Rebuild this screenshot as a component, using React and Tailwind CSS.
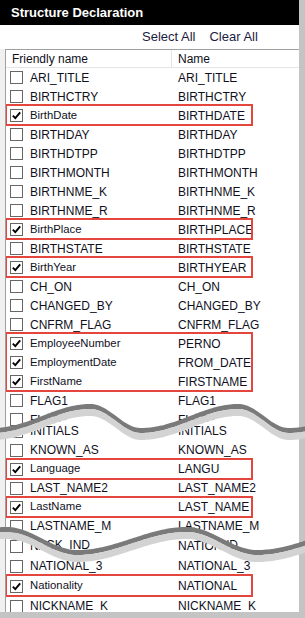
import React from "react";

const pieceA = [
  ["ARI_TITLE", "ARI_TITLE"],
  ["BIRTHCTRY", "BIRTHCTRY"],
  ["BirthDate", "BIRTHDATE", true, "box"],
  ["BIRTHDAY", "BIRTHDAY"],
  ["BIRTHDTPP", "BIRTHDTPP"],
  ["BIRTHMONTH", "BIRTHMONTH"],
  ["BIRTHNME_K", "BIRTHNME_K"],
  ["BIRTHNME_R", "BIRTHNME_R"],
  ["BirthPlace", "BIRTHPLACE", true, "box"],
  ["BIRTHSTATE", "BIRTHSTATE"],
  ["BirthYear", "BIRTHYEAR", true, "box"],
  ["CH_ON", "CH_ON"],
  ["CHANGED_BY", "CHANGED_BY"],
  ["CNFRM_FLAG", "CNFRM_FLAG"],
  ["EmployeeNumber", "PERNO", true, "g1"],
  ["EmploymentDate", "FROM_DATE", true, "g1"],
  ["FirstName", "FIRSTNAME", true, "g1"],
  ["FLAG1", "FLAG1"],
  ["FLAG2", "FLAG2"],
];

const pieceB = [
  ["INITIALS", "INITIALS"],
  ["KNOWN_AS", "KNOWN_AS"],
  ["Language", "LANGU", true, "box"],
  ["LAST_NAME2", "LAST_NAME2"],
  ["LastName", "LAST_NAME", true, "box"],
  ["LASTNAME_M", "LASTNAME_M"],
  ["LOCK_IND", "LOCK_IND"],
];

const pieceC = [
  ["NATIONAL_2", "NATIONAL_2"],
  ["NATIONAL_3", "NATIONAL_3"],
  ["Nationality", "NATIONAL", true, "box"],
  ["NICKNAME_K", "NICKNAME_K"],
];

// skewed sine used for the torn edges
function skew(x, x0, P, r, yc, A) {
  const p = ((((x - x0) % P) + P) % P) / P;
  if (p < r) return yc + (A / 2) * Math.cos((Math.PI * p) / r);
  return yc - (A / 2) * Math.cos((Math.PI * (p - r)) / (1 - r));
}

const wave1 = (x) => skew(x, -7, 148, 0.66, 416, 24);
const wave2 = (x) => skew(x, 77, 180, 0.61, 538.5, 23);

function line(f, dy) {
  const out = [];
  for (let x = 0; x <= 306; x += 2) out.push([x, f(x) + dy]);
  return out;
}

function band(f, a, b) {
  const top = line(f, a);
  const bot = line(f, b).reverse();
  return [...top, ...bot].map(([x, y]) => `${x},${y.toFixed(1)}`).join(" ");
}

function clip(f, offset, top) {
  const pts = line(f, offset).map(([x, y]) => `${x - 6}px ${(y - top).toFixed(1)}px`);
  return `polygon(${pts.join(", ")}, 300px 2000px, -6px 2000px)`;
}

function Check() {
  return (
    <svg width="11" height="11" viewBox="0 0 11 11">
      <path d="M1.8 5.6 L4.3 8.2 L9.2 2.4" fill="none" stroke="#000" strokeWidth="1.9" />
    </svg>
  );
}

function Row({ item, h }) {
  const [friendly, name, checked] = item;
  const mixed = friendly !== friendly.toUpperCase();
  return (
    <div className={`flex items-center ${h} whitespace-nowrap leading-none`}>
      <span className="ml-[4px] w-[13px] h-[13px] border border-[#666] bg-white flex items-center justify-center shrink-0">
        {checked && <Check />}
      </span>
      <span className={`ml-[7px] w-[148px] shrink-0 ${mixed ? "text-[11.3px]" : "text-[12px]"}`}>{friendly}</span>
      <span className="text-[12px]">{name}</span>
    </div>
  );
}

function Rows({ items, h }) {
  const out = [];
  let i = 0;
  while (i < items.length) {
    const tag = items[i][3];
    if (!tag) {
      out.push(<Row key={i} item={items[i]} h={h} />);
      i++;
      continue;
    }
    const group = [];
    if (tag === "box") {
      group.push(items[i]);
      i++;
    } else {
      while (i < items.length && items[i][3] === tag) {
        group.push(items[i]);
        i++;
      }
    }
    out.push(
      <div key={i} className="relative">
        {group.map((it) => (
          <Row key={it[0]} item={it} h={h} />
        ))}
        <div className="absolute -left-[1px] w-[248px] -top-[2px] -bottom-[1px] border-2 border-[#e4463d] pointer-events-none" />
      </div>
    );
  }
  return out;
}

export default function App() {
  return (
    <div
      className="relative w-[305px] h-[618px] overflow-hidden bg-[#c4c4c4] text-[#10101c]"
      style={{ fontFamily: "'Liberation Sans', Arial, sans-serif" }}
    >
      <div className="w-[299px] h-[612px] bg-[#f0f0f0] flex flex-col">
        {/* title bar */}
        <div className="h-[25px] bg-black text-white font-bold text-[13px] flex items-center pl-[11px]">
          Structure Declaration
        </div>
        {/* toolbar */}
        <div className="h-[24px] bg-white flex items-center text-[13px] text-[#1c1c40]">
          <span className="ml-[142px]">Select All</span>
          <span className="ml-[14px]">Clear All</span>
        </div>
        {/* list */}
        <div className="ml-[5px] flex-1 border-l border-t border-[#a0a0a0] bg-white overflow-hidden">
          <div className="h-[18px] flex items-center border-b border-[#e5e5e5] text-[12px]">
            <span className="pl-[6px] w-[166px] h-full flex items-center border-r border-[#e5e5e5]">Friendly name</span>
            <span className="pl-[6px]">Name</span>
          </div>
          <div className="bg-white">
            <Rows items={pieceA} h="h-[19px]" />
          </div>
          <div
            className="relative bg-white -mt-[29px] pt-[21.5px]"
            style={{ clipPath: clip(wave1, 12, 400) }}
          >
            <Rows items={pieceB} h="h-[19px]" />
          </div>
          <div
            className="relative bg-white -mt-[39.5px] pt-[21px]"
            style={{ clipPath: clip(wave2, 12, 515) }}
          >
            <Rows items={pieceC} h="h-[20px]" />
          </div>
        </div>
      </div>

      {/* torn edges */}
      <svg className="absolute left-0 top-0 pointer-events-none" width="305" height="618">
        <polygon points={band(wave1, 0, 5)} fill="#7a7a7a" />
        <polygon points={band(wave1, 5, 12)} fill="#d3d3d3" />
        <polygon points={band(wave2, 0, 5)} fill="#7a7a7a" />
        <polygon points={band(wave2, 5, 12)} fill="#d3d3d3" />
      </svg>
    </div>
  );
}
